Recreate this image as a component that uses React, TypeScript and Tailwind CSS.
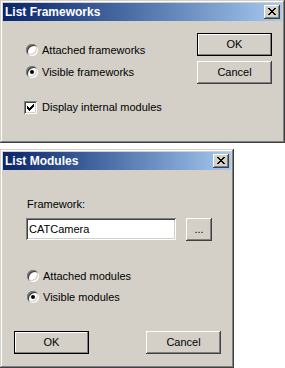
import React from "react";

const FONT = "font-['Liberation_Sans',Arial,sans-serif]";

function CloseGlyph() {
  const rows = [
    "XX....XX",
    ".XX..XX.",
    "..XXXX..",
    "...XX...",
    "..XXXX..",
    ".XX..XX.",
    "XX....XX",
  ];
  return (
    <svg width="8" height="7" viewBox="0 0 8 7" shapeRendering="crispEdges">
      {rows.map((r, y) =>
        r.split("").map((c, x) =>
          c === "X" ? <rect key={`${x}-${y}`} x={x} y={y} width="1" height="1" fill="#000" /> : null
        )
      )}
    </svg>
  );
}

function CheckGlyph() {
  const rows = [
    "......X",
    ".....XX",
    "X...XXX",
    "XX.XXX.",
    "XXXXX..",
    ".XXX...",
    "..X....",
  ];
  return (
    <svg width="7" height="7" viewBox="0 0 7 7" shapeRendering="crispEdges">
      {rows.map((r, y) =>
        r.split("").map((c, x) =>
          c === "X" ? <rect key={`${x}-${y}`} x={x} y={y} width="1" height="1" fill="#000" /> : null
        )
      )}
    </svg>
  );
}

function TitleBar({ title }: { title: string }) {
  return (
    <div className="h-[18px] flex items-center justify-between pl-[2px] pr-[2px] bg-gradient-to-r from-[#0a246a] to-[#a6caf0]">
      <span className="text-white font-bold text-[12px] leading-[14px]">{title}</span>
      <div className="w-[16px] h-[14px] bg-[#d4d0c8] flex items-center justify-center shadow-[inset_-1px_-1px_#404040,inset_1px_1px_#fff,inset_-2px_-2px_#808080]">
        <div className="mt-[-1px] ml-[-1px]">
          <CloseGlyph />
        </div>
      </div>
    </div>
  );
}

function Radio({ checked, label }: { checked?: boolean; label: string }) {
  return (
    <div className="h-[16px] flex items-center">
      <div className="w-[12px] h-[12px] rounded-full bg-white flex items-center justify-center shadow-[inset_1px_1px_#808080,inset_-1px_-1px_#fff,inset_2px_2px_#404040,inset_-2px_-2px_#d4d0c8]">
        {checked ? <div className="w-[4px] h-[4px] rounded-full bg-black" /> : null}
      </div>
      <span className="ml-[4px] text-[11px] leading-[13px] text-black">{label}</span>
    </div>
  );
}

function Button({ label, isDefault }: { label: string; isDefault?: boolean }) {
  return isDefault ? (
    <div className="w-[75px] h-[23px] border border-black bg-[#d4d0c8] flex items-center justify-center shadow-[inset_-1px_-1px_#808080,inset_1px_1px_#fff] text-[11px] leading-[13px] text-black">
      {label}
    </div>
  ) : (
    <div className="w-[75px] h-[23px] bg-[#d4d0c8] flex items-center justify-center shadow-[inset_-1px_-1px_#404040,inset_1px_1px_#fff,inset_-2px_-2px_#808080] text-[11px] leading-[13px] text-black">
      {label}
    </div>
  );
}

export default function App() {
  return (
    <div className={`w-[285px] h-[368px] bg-white overflow-hidden ${FONT}`}>
      {/* Dialog 1 */}
      <div className="w-[285px] h-[143px] bg-[#d4d0c8] p-[3px] flex flex-col shadow-[inset_-1px_-1px_#404040,inset_1px_1px_#d4d0c8,inset_-2px_-2px_#808080,inset_2px_2px_#fff]">
        <TitleBar title="List Frameworks" />
        <div className="flex justify-between">
          <div className="pl-[23px] pt-[21px] flex flex-col">
            <Radio label="Attached frameworks" />
            <div className="mt-[6px]">
              <Radio checked label="Visible frameworks" />
            </div>
            <div className="mt-[19px] h-[16px] flex items-center ml-[-2px]">
              <div className="w-[13px] h-[13px] bg-white flex items-center justify-center shadow-[inset_1px_1px_#808080,inset_-1px_-1px_#fff,inset_2px_2px_#404040,inset_-2px_-2px_#d4d0c8]">
                <CheckGlyph />
              </div>
              <span className="ml-[5px] text-[11px] leading-[13px] text-black">Display internal modules</span>
            </div>
          </div>
          <div className="pt-[12px] pr-[10px] flex flex-col gap-[5px]">
            <Button label="OK" isDefault />
            <Button label="Cancel" />
          </div>
        </div>
      </div>

      {/* Dialog 2 */}
      <div className="mt-[6px] w-[234px] h-[219px] bg-[#d4d0c8] p-[3px] flex flex-col shadow-[inset_-1px_-1px_#404040,inset_1px_1px_#d4d0c8,inset_-2px_-2px_#808080,inset_2px_2px_#fff]">
        <TitleBar title="List Modules" />
        <div className="pl-[23px] pt-[26px] flex flex-col">
          <div className="h-[16px] flex items-center ml-[1px] text-[11px] leading-[13px] text-black">Framework:</div>
          <div className="mt-[6px] flex items-start">
            <div className="w-[150px] h-[22px] bg-white flex items-center pl-[3px] shadow-[inset_1px_1px_#808080,inset_-1px_-1px_#fff,inset_2px_2px_#404040,inset_-2px_-2px_#d4d0c8] text-[11px] leading-[13px] text-black">
              CATCamera
            </div>
            <div className="ml-[10px] w-[26px] h-[23px] bg-[#d4d0c8] flex items-center justify-center shadow-[inset_-1px_-1px_#404040,inset_1px_1px_#fff,inset_-2px_-2px_#808080] text-[11px] leading-[13px] text-black">
              ...
            </div>
          </div>
          <div className="mt-[27px] ml-[1px]">
            <Radio label="Attached modules" />
          </div>
          <div className="mt-[5px] ml-[1px]">
            <Radio checked label="Visible modules" />
          </div>
        </div>
        <div className="mt-[26px] pl-[11px] flex gap-[57px]">
          <Button label="OK" isDefault />
          <Button label="Cancel" />
        </div>
      </div>
    </div>
  );
}
